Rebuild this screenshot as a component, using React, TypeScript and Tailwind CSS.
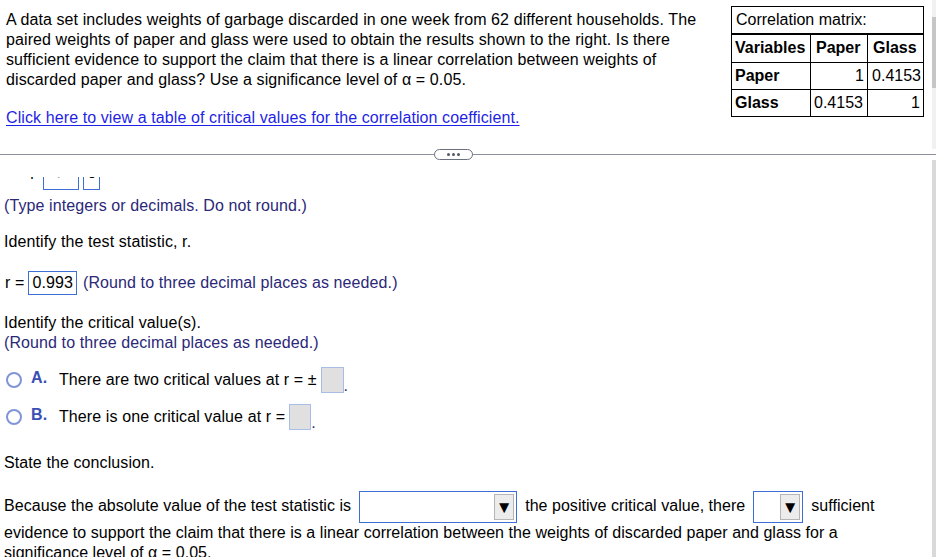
export default function App() {
  return (
    <div className="w-[936px] h-[557px] overflow-hidden bg-white text-black flex flex-col text-[16px] leading-[20px] tracking-[0.1px] font-['Liberation_Sans',Arial,sans-serif]">
      {/* top pane: question + correlation matrix */}
      <div className="h-[149px] flex shrink-0">
        <div className="flex-1 flex">
          <div className="w-[720px] pl-[6px] pt-[10px]">
            <p>
              A data set includes weights of garbage discarded in one week from 62 different households. The paired
              weights of paper and glass were used to obtain the results shown to the right. Is there sufficient
              evidence to support the claim that there is a linear correlation between weights of discarded paper
              and glass? Use a significance level of α = 0.05.
            </p>
            <a className="block mt-[18px] text-[#1f1fe6] underline underline-offset-2">
              Click here to view a table of critical values for the correlation coefficient.
            </a>
          </div>
          <div className="pt-[6px] pl-[11px] tracking-normal">
            <table className="border-collapse border border-black">
              <tbody>
                <tr className="h-[27px]">
                  <td colSpan={3} className="border-b-2 border-black px-[4px] leading-[18px]">
                    Correlation matrix:
                  </td>
                </tr>
                <tr className="h-[29px] font-bold">
                  <td className="w-[79px] border border-black px-[3px]">Variables</td>
                  <td className="w-[57px] border border-black px-[5px]">Paper</td>
                  <td className="w-[56px] border border-black px-[5px]">Glass</td>
                </tr>
                <tr className="h-[27px]">
                  <td className="border border-black px-[3px] font-bold">Paper</td>
                  <td className="border border-black px-[3px] text-right">1</td>
                  <td className="border border-black px-[2px] text-right">0.4153</td>
                </tr>
                <tr className="h-[27px]">
                  <td className="border border-black px-[3px] font-bold">Glass</td>
                  <td className="border border-black px-[3px] text-left">0.4153</td>
                  <td className="border border-black px-[3px] text-right">1</td>
                </tr>
              </tbody>
            </table>
          </div>
        </div>
        <div className="w-[4px] bg-[#f1f1f1] pt-[17px]">
          <div className="h-[71px] bg-[#c6c6c6]" />
        </div>
      </div>

      {/* divider with handle */}
      <div className="relative h-[11px] shrink-0 flex items-center">
        <div className="w-full h-px bg-[#8a8f9c]" />
        <div className="absolute left-[434px] top-0 w-[39px] h-[11px] rounded-full border border-[#6b7080] bg-white flex items-center justify-center gap-[2px]">
          <span className="w-[3px] h-[3px] rounded-full bg-[#555a66]" />
          <span className="w-[3px] h-[3px] rounded-full bg-[#555a66]" />
          <span className="w-[3px] h-[3px] rounded-full bg-[#555a66]" />
        </div>
      </div>

      {/* bottom pane: answer steps */}
      <div className="flex-1 flex overflow-hidden">
        <div className="flex-1 pl-[4px] pt-[17px] overflow-hidden">
          {/* row scrolled partly out of view */}
          <div className="h-[13px] overflow-hidden flex flex-col justify-end">
            <div className="flex items-end h-[30px] gap-[4px]">
              <span className="mb-[9px] leading-[20px]">H₁: ρ</span>
              <span className="w-[36px] h-[24px] border border-[#3d6fd6] text-center leading-[12px]">≠</span>
              <span className="w-[17px] h-[24px] border border-[#3d6fd6] text-center leading-[12px]">0</span>
            </div>
          </div>
          <p className="mt-[6px] text-[#2b2878]">(Type integers or decimals. Do not round.)</p>
          <p className="mt-[16px]">Identify the test statistic, r.</p>
          <div className="mt-[18px] flex items-center h-[26px]">
            <span className="pl-[1px]">r =</span>
            <span className="ml-[4px] h-[24px] px-[3px] border border-[#3d6fd6] flex items-center">0.993</span>
            <span className="ml-[6px] text-[#2b2878]">(Round to three decimal places as needed.)</span>
          </div>
          <p className="mt-[17px]">Identify the critical value(s).</p>
          <p className="text-[#2b2878]">(Round to three decimal places as needed.)</p>

          <div className="mt-[14px] flex items-center h-[26px]">
            <span className="ml-[2px] w-[16px] h-[16px] rounded-full border-2 border-[#8194d8]" />
            <span className="ml-[9px] w-[28px] font-bold text-[#3a4fb5] -mt-[4px]">A.</span>
            <span>There are two critical values at r = ±</span>
            <span className="ml-[4px] w-[23px] h-[26px] bg-[#e0e0e0] border border-[#a9bde9]" />
            <span className="self-end text-[#2b2878] leading-[14px]">.</span>
          </div>
          <div className="mt-[11px] flex items-center h-[26px]">
            <span className="ml-[2px] w-[16px] h-[16px] rounded-full border-2 border-[#8194d8]" />
            <span className="ml-[9px] w-[28px] font-bold text-[#3a4fb5] -mt-[4px]">B.</span>
            <span>There is one critical value at r =</span>
            <span className="ml-[4px] w-[22px] h-[26px] bg-[#e0e0e0] border border-[#a9bde9]" />
            <span className="self-end text-[#2b2878] leading-[14px]">.</span>
          </div>

          <p className="mt-[23px]">State the conclusion.</p>
          <div className="mt-[18px] tracking-[0.04px]">
            Because the absolute value of the test statistic is
            <span className="inline-flex align-middle mx-[8px] w-[158px] h-[32px] border border-[#3d6fd6] justify-end items-center pr-[2px]">
              <span className="w-[20px] h-[26px] bg-[#ececec] border border-[#b5b5b5] flex items-center justify-center text-[17px] leading-none">
                ▼
              </span>
            </span>
            the positive critical value, there
            <span className="inline-flex align-middle mx-[8px] w-[50px] h-[32px] border border-[#3d6fd6] justify-end items-center pr-[2px]">
              <span className="w-[20px] h-[26px] bg-[#ececec] border border-[#b5b5b5] flex items-center justify-center text-[17px] leading-none">
                ▼
              </span>
            </span>
            sufficient
            <br />
            evidence to support the claim that there is a linear correlation between the weights of discarded paper and
            glass for a
            <br />
            significance level of α = 0.05.
          </div>
        </div>
        <div className="w-[4px] bg-[#d9d9d9]" />
      </div>
    </div>
  );
}
